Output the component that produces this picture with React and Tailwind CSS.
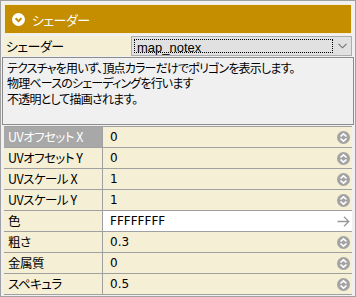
import React from "react";

const F = "[font-family:'Noto_Sans_CJK_JP','Liberation_Sans',sans-serif] [font-feature-settings:'palt']";

function Spin() {
  return (
    <svg width="13" height="13" viewBox="0 0 13 13" className="shrink-0">
      <circle cx="6.5" cy="6.5" r="6.5" fill="#a3a3a3" />
      <path d="M3.5 5.5 L6.5 2.8 L9.5 5.5" stroke="#fff" strokeWidth="1.6" fill="none" />
      <path d="M3.5 7.5 L6.5 10.2 L9.5 7.5" stroke="#fff" strokeWidth="1.6" fill="none" />
    </svg>
  );
}

function Arrow() {
  return (
    <svg width="13" height="11" viewBox="0 0 13 11" className="shrink-0">
      <path d="M0.5 5.5 H12 M7 0.8 L11.8 5.5 L7 10.2" stroke="#9a9a9a" strokeWidth="1.3" fill="none" />
    </svg>
  );
}

const rows = [
  { label: "UVオフセット X", value: "0", selected: true },
  { label: "UVオフセット Y", value: "0" },
  { label: "UVスケール X", value: "1" },
  { label: "UVスケール Y", value: "1" },
  { label: "色", value: "FFFFFFFF", color: true },
  { label: "粗さ", value: "0.3" },
  { label: "金属質", value: "0" },
  { label: "スペキュラ", value: "0.5" },
];

export default function App() {
  return (
    <div className={`w-[356px] h-[297px] bg-[#f0f0f0] border border-[#a0a0a0] p-[3px] flex flex-col text-[12px] text-black ${F}`}>
      <div className="h-[30px] shrink-0 border border-[#f5efd5] bg-[#c48e00] flex items-center pl-[7px] gap-[7px]">
        <svg width="13" height="13" viewBox="0 0 13 13">
          <circle cx="6.5" cy="6.5" r="6.5" fill="#fff" />
          <path d="M3.6 5.2 L6.5 8.1 L9.4 5.2" stroke="#c48e00" strokeWidth="2" fill="none" />
        </svg>
        <span className="text-white text-[13px] leading-none tracking-[-0.5px]">シェーダー</span>
      </div>
      <div className="h-[20px] mt-[2px] shrink-0 flex">
        <div className="w-[127px] bg-[#f5efd5] pl-[2px] text-[13px] leading-[20px] tracking-[-0.5px]">シェーダー</div>
        <div className="flex-1 bg-[#e1e1e1] border border-[#adadad] flex items-stretch py-[2px] pl-[2px]">
          <div className="w-[199px] border border-dotted border-black pl-[2px] text-[13px] leading-[16px] [font-family:'Liberation_Sans',sans-serif]">
            map_notex
          </div>
          <div className="flex-1 flex items-center justify-center">
            <svg width="9" height="6" viewBox="0 0 9 6">
              <path d="M0.5 0.8 L4.5 4.8 L8.5 0.8" stroke="#707070" strokeWidth="1.1" fill="none" />
            </svg>
          </div>
        </div>
      </div>
      <div className="h-[68px] mt-[1px] -mx-[2px] shrink-0 bg-[#f0f0f0] border border-[#8c8c8c] pl-[4px] pt-[2px] leading-[15px] tracking-[-0.8px]">
        <div>テクスチャを用いず、頂点カラーだけでポリゴンを表示します。</div>
        <div>物理ベースのシェーディングを行います</div>
        <div className="mt-[1px]">不透明として描画されます。</div>
      </div>
      <div className="mt-[1px] flex flex-col border-t border-[#a0a0a0]">
        {rows.map((r, i) => (
          <div key={i} className="h-[21px] flex border-b border-[#a0a0a0]">
            <div
              className={`w-[99px] shrink-0 border-r border-[#a0a0a0] pl-[4px] text-[12.5px] leading-[20px] tracking-[-0.5px] ${
                r.selected ? "bg-[#a8a8a8] text-white" : "bg-[#f5efd5]"
              }`}
            >
              {r.label}
            </div>
            <div
              className={`flex-1 flex items-center justify-between pl-[7px] pr-[2px] ${
                r.color ? "bg-white" : "bg-[#f5efd5]"
              }`}
            >
              <span className="leading-none [font-family:'DejaVu_Sans',sans-serif] text-[12px]">{r.value}</span>
              {r.color ? <Arrow /> : <Spin />}
            </div>
          </div>
        ))}
      </div>
    </div>
  );
}
